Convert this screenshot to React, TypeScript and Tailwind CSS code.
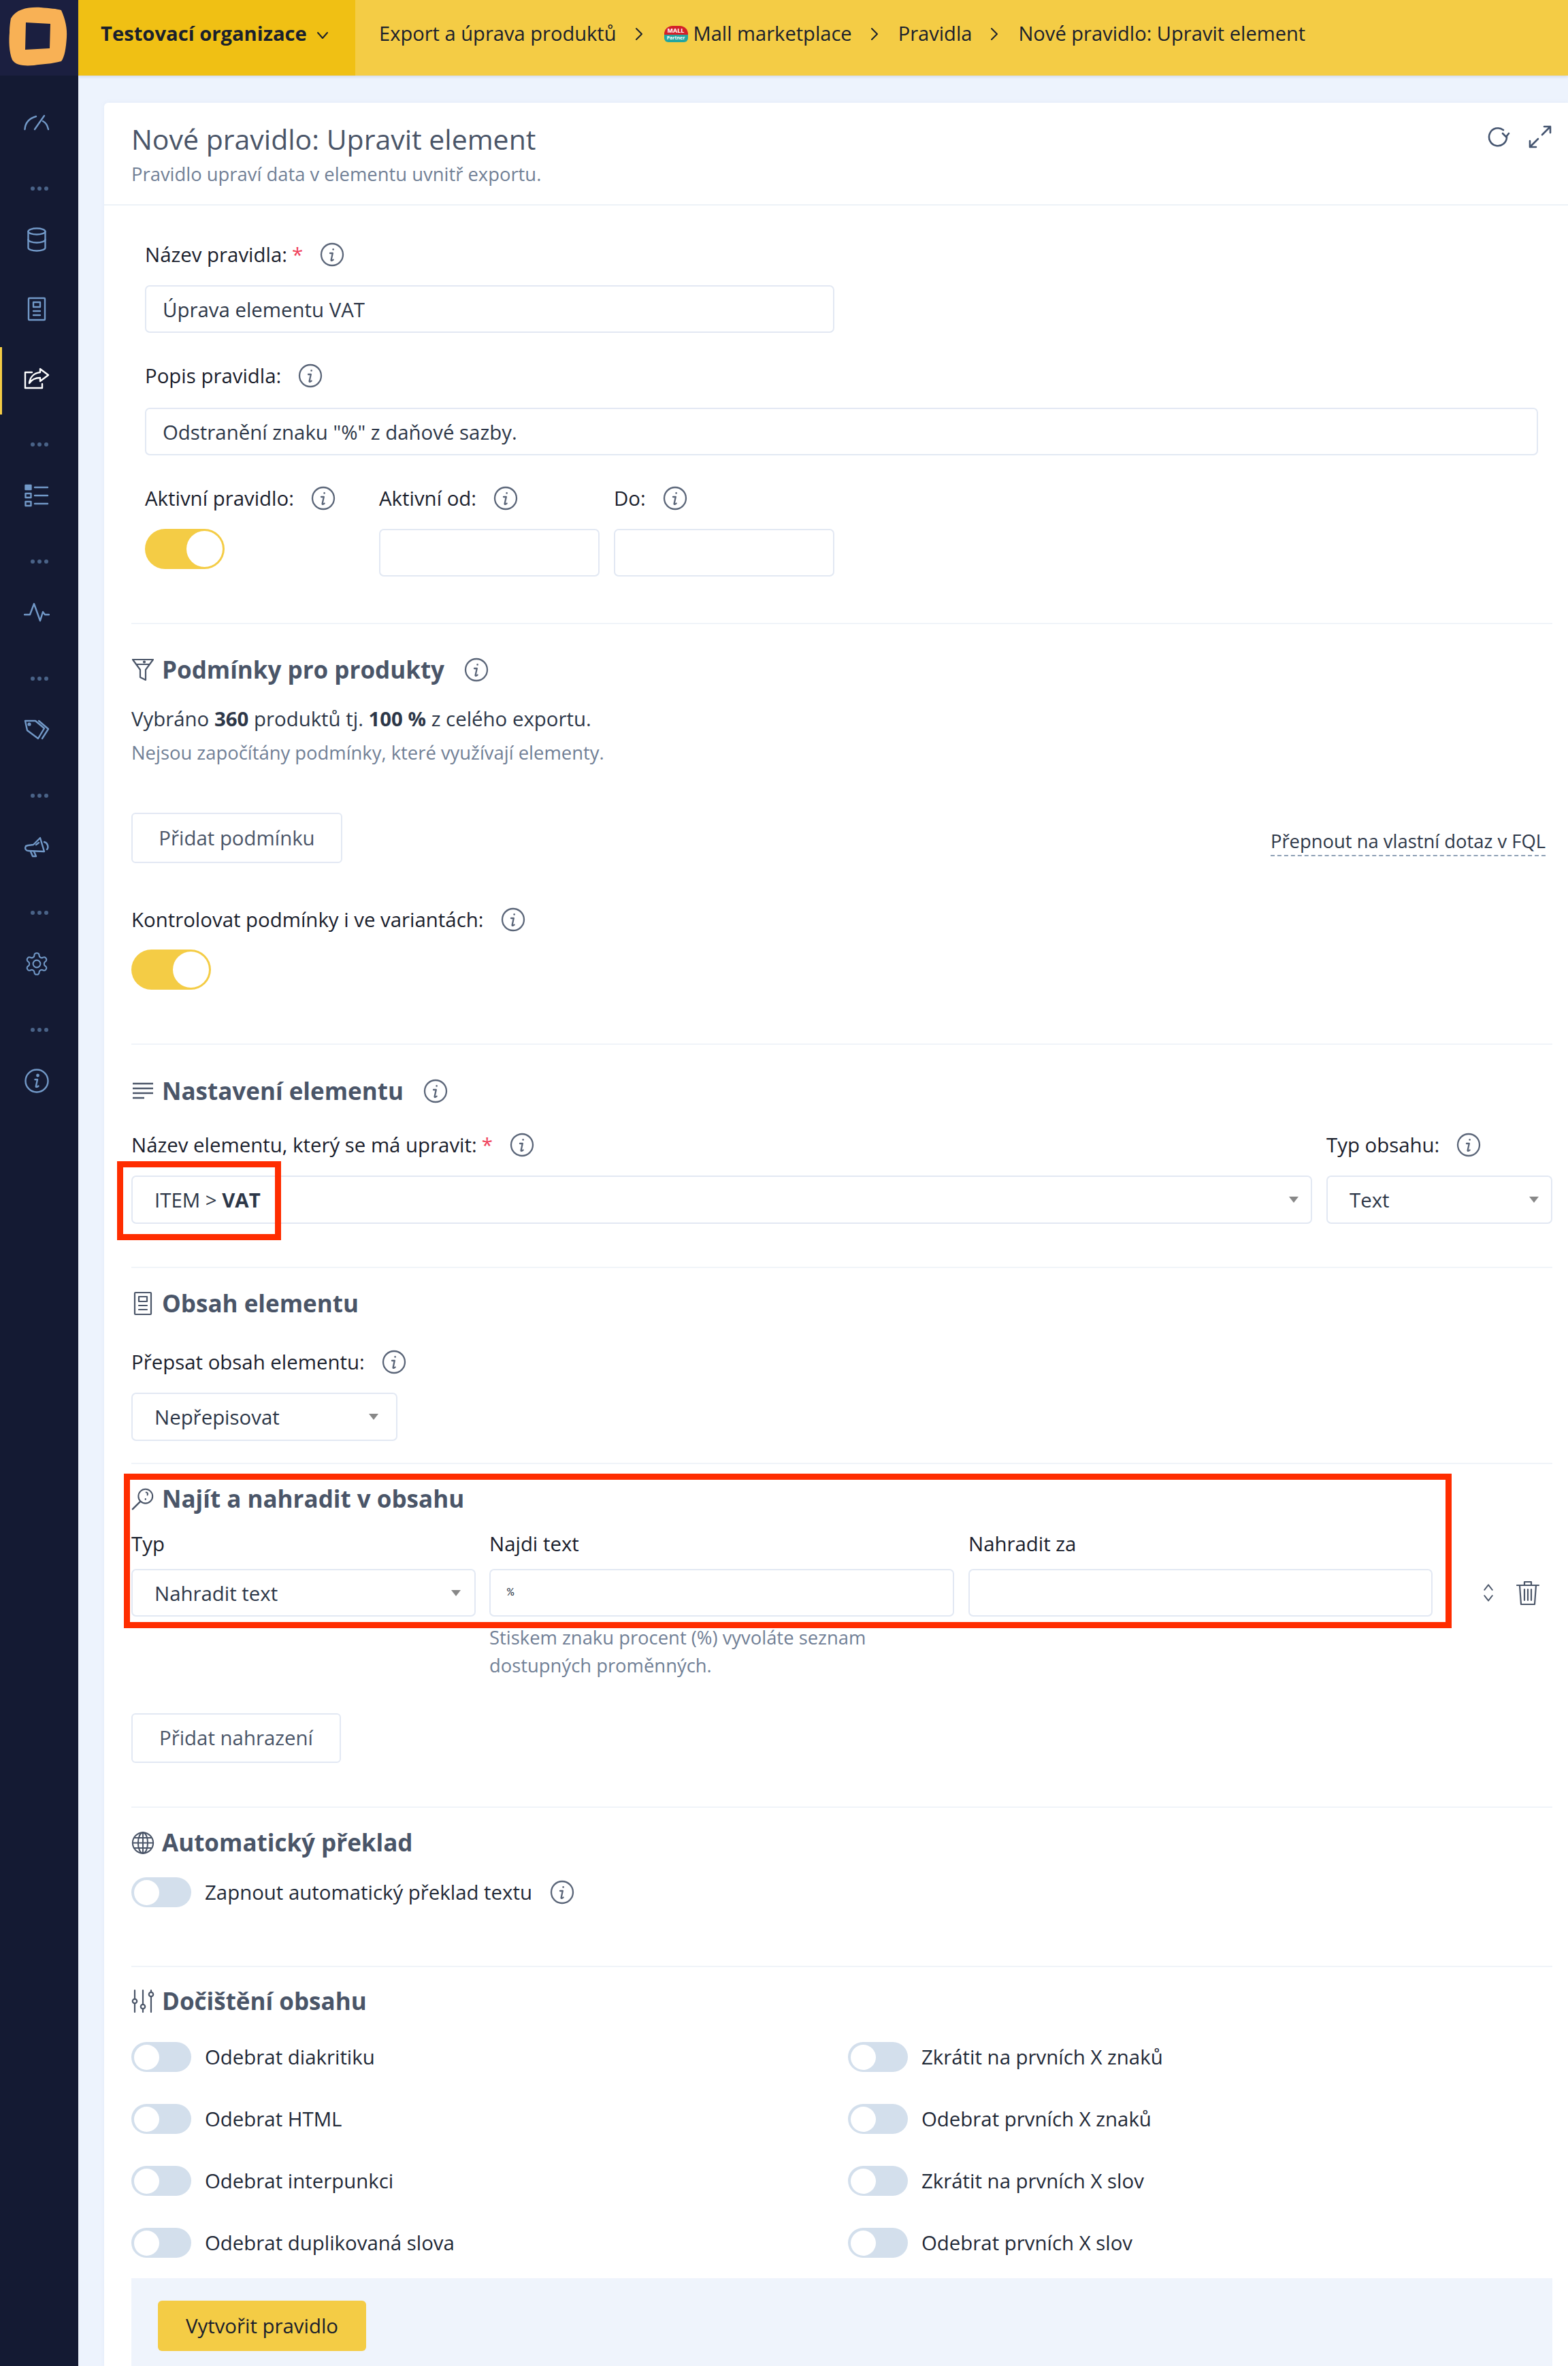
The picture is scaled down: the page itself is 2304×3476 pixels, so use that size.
import React from 'react';

const fieldClass = 'rounded-[7px] border-2 border-[#e2e8f3] bg-white text-[#2d3748] text-[29.4px] outline-none';

// Shared info icon next to labels and headings
const InfoIcon = ({ className = '' }: { className?: string }) => (
  <svg viewBox="0 0 36 36" className={`w-[36px] h-[36px] shrink-0 ${className}`} fill="none" stroke="#5a6578" strokeWidth="2.3" strokeLinecap="round">
    <circle cx="18" cy="18" r="16" />
    <path d="M15 16h3.8L16.6 26c-.2 1.2 1.2 1.2 3-.4" strokeLinejoin="round" />
    <circle cx="19.6" cy="10.4" r="1.3" fill="#5a6578" stroke="none" />
  </svg>
);

const Label = ({ text, required, info = true, className = '' }: { text: string; required?: boolean; info?: boolean; className?: string }) => (
  <div className={`h-[40px] flex items-center text-[29.4px] text-[#1a202c] whitespace-nowrap ${className}`}>
    <span>{text}</span>
    {required && <span className="ml-[7px] text-[#f0405a]">*</span>}
    {info && <InfoIcon className="ml-[25px]" />}
  </div>
);

const Divider = ({ className = '' }: { className?: string }) => <div className={`h-[2px] bg-[#f0f4f9] ${className}`} />;

const SelectBox = ({ text, className = '', arrowClass = 'mr-[26px]' }: { text?: string; className?: string; arrowClass?: string }) => (
  <div className={`${fieldClass} flex items-center justify-between pl-[32px] ${className}`}>
    <span className="pt-[2px]">{text}</span>
    <span className={`w-0 h-0 border-x-[7px] border-x-transparent border-t-[9px] border-t-[#888888] ${arrowClass}`} />
  </div>
);

const Toggle = ({ className = '' }: { className?: string }) => (
  <div className={`w-[117px] h-[59px] rounded-full bg-[#f4cc45] flex items-center justify-end pr-[3px] ${className}`}>
    <div className="w-[53px] h-[53px] rounded-full bg-white" />
  </div>
);

const OffToggle = ({ label, info }: { label: string; info?: boolean }) => (
  <div className="flex items-center h-[44px]">
    <div className="w-[88px] h-[44px] rounded-full bg-[#d3dfec] flex items-center pl-[4px] shrink-0">
      <div className="w-[37px] h-[37px] rounded-full bg-white" />
    </div>
    <span className="ml-[20px] text-[29.4px] text-[#1f2937] whitespace-nowrap">{label}</span>
    {info && <InfoIcon className="ml-[26px]" />}
  </div>
);

const OutlineButton = ({ text, className = '' }: { text: string; className?: string }) => (
  <button className={`rounded-[6px] border-2 border-[#e2e8f3] bg-white text-[29.4px] text-[#4a5568] ${className}`}>{text}</button>
);

const Heading = ({ icon, text, info, className = '' }: { icon: React.ReactNode; text: string; info?: boolean; className?: string }) => (
  <div className={`h-[44px] flex items-center ${className}`}>
    <div className="w-[34px] h-[40px] flex items-center justify-center shrink-0">{icon}</div>
    <h2 className="ml-[11px] text-[35px] font-bold text-[#4a5568] whitespace-nowrap">{text}</h2>
    {info && <InfoIcon className="ml-[29px]" />}
  </div>
);

const navStroke = {
  fill: 'none',
  stroke: '#7299c8',
  strokeWidth: 2.4,
  strokeLinecap: 'round' as const,
  strokeLinejoin: 'round' as const,
};

const NavDots = () => (
  <div className="mt-[74px] mb-[52px] h-[6px] flex justify-center gap-[4px]">
    <span className="w-[6px] h-[6px] rounded-full bg-[#4a6388]" />
    <span className="w-[6px] h-[6px] rounded-full bg-[#4a6388]" />
    <span className="w-[6px] h-[6px] rounded-full bg-[#4a6388]" />
  </div>
);

const NavIcon = ({ children, className = '' }: { children: React.ReactNode; className?: string }) => (
  <div className={`relative h-[40px] flex items-center justify-center pr-[7px] ${className}`}>{children}</div>
);

const Sidebar = () => (
  <aside className="w-[115px] shrink-0 bg-[#141a33] flex flex-col">
    <div className="h-[111px] bg-[#1b1f40] shrink-0">
      <svg viewBox="0 0 115 111" className="w-[115px] h-[111px]">
        <path
          fillRule="evenodd"
          fill="#f8b155"
          d="M16 27C24 13 42 10 60 11C72 12 84 13 90 15C96 28 99 42 98 55C97 70 95 84 90 90C76 94 62 94 50 96C38 97 24 97 18 88C13 76 13 58 14 48C14 40 15 32 16 27ZM38 33L74 35L73 71L37 73Z"
        />
      </svg>
    </div>
    <nav className="pt-[49px] flex flex-col">
      <NavIcon>
        <svg viewBox="0 0 38 24" className="w-[38px] h-[24px]" {...navStroke}>
          <path d="M1.5 22C2 13 8 6 18 3" />
          <path d="M30 2L16 22" />
          <path d="M28 10C32 12 35 17 36 22" />
        </svg>
      </NavIcon>
      <NavDots />
      <NavIcon>
        <svg viewBox="0 0 30 36" className="w-[30px] h-[36px]" {...navStroke}>
          <ellipse cx="15" cy="6" rx="12.5" ry="4.5" />
          <path d="M2.5 6V30C2.5 32.5 8 34.5 15 34.5S27.5 32.5 27.5 30V6" />
          <path d="M2.5 18C2.5 20.5 8 22.5 15 22.5S27.5 20.5 27.5 18" />
        </svg>
      </NavIcon>
      <NavIcon className="mt-[62px]">
        <svg viewBox="0 0 28 36" className="w-[28px] h-[36px]" {...navStroke}>
          <rect x="2" y="2" width="24" height="32" rx="1" />
          <rect x="9" y="8" width="10" height="7" />
          <path d="M9 21H19M9 27H19" />
        </svg>
      </NavIcon>
      <NavIcon className="mt-[62px]">
        <span className="absolute left-0 top-[-26px] w-[3px] h-[99px] bg-[#f4cc45]" />
        <svg viewBox="0 0 38 32" className="w-[38px] h-[32px]" fill="none" stroke="#ffffff" strokeWidth="2.4" strokeLinecap="round" strokeLinejoin="round">
          <path d="M12 7H2V30H27V24" />
          <path d="M24 2L36 11L24 20V15C17 15 12 17 8 23C9 14 15 8 24 7Z" />
        </svg>
      </NavIcon>
      <NavDots />
      <NavIcon>
        <svg viewBox="0 0 36 34" className="w-[36px] h-[34px]" {...navStroke}>
          <rect x="1.5" y="2" width="8" height="6" fill="#7299c8" />
          <rect x="1.5" y="14" width="8" height="6" />
          <rect x="1.5" y="26" width="8" height="6" />
          <path d="M15 5H34M15 17H34M15 29H34" />
        </svg>
      </NavIcon>
      <NavDots />
      <NavIcon>
        <svg viewBox="0 0 38 34" className="w-[38px] h-[34px]" {...navStroke}>
          <path d="M1 20H9L15 4L24 29L28 16L31 20H37" />
        </svg>
      </NavIcon>
      <NavDots />
      <NavIcon>
        <svg viewBox="0 0 38 34" className="w-[38px] h-[34px]" {...navStroke}>
          <path d="M2 4H17L30 15L21 30L5 18Z" />
          <path d="M22 4L36 16L27 30" />
          <circle cx="8" cy="9" r="1.4" />
        </svg>
      </NavIcon>
      <NavDots />
      <NavIcon>
        <svg viewBox="0 0 38 34" className="w-[38px] h-[34px]" {...navStroke}>
          <path d="M3 16C1 20 3 23 7 23L30 24L24 4L14 14L6 15Z" />
          <path d="M10 24L13 31H18L15 24" />
          <path d="M30 10C35 11 37 18 34 21" />
          <path d="M18 14L22 11" />
        </svg>
      </NavIcon>
      <NavDots />
      <NavIcon>
        <svg viewBox="0 0 24 24" className="w-[38px] h-[38px]" fill="none" stroke="#7299c8" strokeWidth="1.3" strokeLinecap="round" strokeLinejoin="round">
          <path d="M12.22 2h-.44a2 2 0 0 0-2 2v.18a2 2 0 0 1-1 1.73l-.43.25a2 2 0 0 1-2 0l-.15-.08a2 2 0 0 0-2.73.73l-.22.38a2 2 0 0 0 .73 2.73l.15.1a2 2 0 0 1 1 1.72v.51a2 2 0 0 1-1 1.74l-.15.09a2 2 0 0 0-.73 2.73l.22.38a2 2 0 0 0 2.73.73l.15-.08a2 2 0 0 1 2 0l.43.25a2 2 0 0 1 1 1.73V20a2 2 0 0 0 2 2h.44a2 2 0 0 0 2-2v-.18a2 2 0 0 1 1-1.73l.43-.25a2 2 0 0 1 2 0l.15.08a2 2 0 0 0 2.73-.73l.22-.39a2 2 0 0 0-.73-2.73l-.15-.08a2 2 0 0 1-1-1.74v-.5a2 2 0 0 1 1-1.74l.15-.09a2 2 0 0 0 .73-2.73l-.22-.38a2 2 0 0 0-2.73-.73l-.15.08a2 2 0 0 1-2 0l-.43-.25a2 2 0 0 1-1-1.73V4a2 2 0 0 0-2-2z" />
          <circle cx="12" cy="12" r="3.4" />
        </svg>
      </NavIcon>
      <NavDots />
      <NavIcon>
        <svg viewBox="0 0 36 36" className="w-[36px] h-[36px]" {...navStroke}>
          <circle cx="18" cy="18" r="16.5" />
          <path d="M15.5 16H19L16.8 26C16.6 27.4 18.4 27.2 20.5 25.5" />
          <circle cx="19.5" cy="10" r="1.2" fill="#7299c8" />
        </svg>
      </NavIcon>
    </nav>
  </aside>
);

const Chevron = ({ className = '' }: { className?: string }) => (
  <svg viewBox="0 0 12 20" className={`w-[12px] h-[20px] ${className}`} fill="none" stroke="#1a202c" strokeWidth="2" strokeLinecap="round" strokeLinejoin="round">
    <path d="M2 2L10 10L2 18" />
  </svg>
);

const MallBadge = () => (
  <div className="w-[35px] h-[24px] flex flex-col overflow-hidden rounded-[6px] font-bold text-white text-center shrink-0">
    <div className="h-[13px] bg-[#d3202a] rounded-t-[12px] text-[9px] leading-[13px]">MALL</div>
    <div className="h-[11px] bg-[#23a5a0] text-[7px] leading-[10px]">Partner</div>
  </div>
);

const Topbar = () => (
  <header className="h-[111px] shrink-0 bg-[#f4cc45] flex shadow-[0_2px_4px_rgba(90,100,130,0.18)] relative">
    <div className="w-[407px] bg-[#f0c014] flex items-center pl-[33px] pb-[12px] text-[#1a202c]">
      <span className="text-[29.2px] font-bold whitespace-nowrap">Testovací organizace</span>
      <svg viewBox="0 0 18 12" className="ml-[14px] mt-[4px] w-[18px] h-[12px]" fill="none" stroke="#1a202c" strokeWidth="2" strokeLinecap="round" strokeLinejoin="round">
        <path d="M2 2L9 10L16 2" />
      </svg>
    </div>
    <div className="flex items-center pl-[35px] pb-[12px] text-[29.1px] text-[#1a202c] whitespace-nowrap">
      <span>Export a úprava produktů</span>
      <Chevron className="ml-[27px] mr-[31px]" />
      <MallBadge />
      <span className="ml-[8px]">Mall marketplace</span>
      <Chevron className="ml-[27px] mr-[29px]" />
      <span>Pravidla</span>
      <Chevron className="ml-[27px] mr-[29px]" />
      <span>Nové pravidlo: Upravit element</span>
    </div>
  </header>
);

const iconStroke = {
  fill: 'none',
  stroke: '#4a5568',
  strokeWidth: 2.2,
  strokeLinecap: 'round' as const,
  strokeLinejoin: 'round' as const,
};

const RuleForm = () => (
  <div className="bg-white rounded-tl-[6px] ml-[38px] mt-[40px] shadow-[0_0_6px_rgba(120,140,180,0.08)]">
    <div className="h-[151px] border-b-2 border-[#edf2f7] flex justify-between pl-[40px] pr-[23px]">
      <div>
        <h1 className="mt-[23px] text-[41px] leading-[60px] text-[#4a5568] whitespace-nowrap">Nové pravidlo: Upravit element</h1>
        <p className="mt-[2px] text-[27.4px] leading-[40px] text-[#718096] whitespace-nowrap">Pravidlo upraví data v elementu uvnitř exportu.</p>
      </div>
      <div className="flex items-start pt-[32px] gap-[26px]">
        <svg viewBox="0 0 36 36" className="w-[36px] h-[36px]" fill="none" stroke="#44546f" strokeWidth="2.6" strokeLinecap="round" strokeLinejoin="round">
          <path d="M31 18A13 13 0 1 1 26 8" />
          <path d="M26 14L31 19L35 14" transform="translate(-1 -1)" />
        </svg>
        <svg viewBox="0 0 36 36" className="w-[36px] h-[36px]" fill="none" stroke="#44546f" strokeWidth="2.6" strokeLinecap="round" strokeLinejoin="round">
          <path d="M21 15L33 3M24 3H33V12" />
          <path d="M15 21L3 33M3 24V33H12" />
        </svg>
      </div>
    </div>

    <div className="pl-[40px] pr-[23px]">
      <div className="pl-[20px] pr-[21px] pt-[52px]">
        <Label text="Název pravidla:" required />
        <input readOnly value="Úprava elementu VAT" className={`${fieldClass} h-[70px] mt-[25px] w-[1013px] px-[24px] pt-[2px] block`} />
        <Label text="Popis pravidla:" className="mt-[43px]" />
        <input readOnly value='Odstranění znaku "%" z daňové sazby.' className={`${fieldClass} h-[70px] mt-[27px] w-full px-[24px] pt-[2px] block`} />
        <div className="mt-[43px] flex">
          <div className="w-[344px]">
            <Label text="Aktivní pravidlo:" />
            <Toggle className="mt-[25px]" />
          </div>
          <div className="w-[345px]">
            <Label text="Aktivní od:" />
            <div className={`${fieldClass} h-[70px] mt-[25px] w-[324px]`} />
          </div>
          <div>
            <Label text="Do:" />
            <div className={`${fieldClass} h-[70px] mt-[25px] w-[324px]`} />
          </div>
        </div>
      </div>
      <Divider className="mt-[68px]" />

      <Heading
        text="Podmínky pro produkty"
        info
        className="mt-[45px]"
        icon={
          <svg viewBox="0 0 34 36" className="w-[34px] h-[36px]" {...iconStroke}>
            <path d="M2 3H32L21 18V33L13 29V18Z" />
            <path d="M8 10H26" />
            <circle cx="19" cy="6.5" r="1" />
          </svg>
        }
      />
      <p className="mt-[30px] text-[29.4px] leading-[40px] text-[#2d3748]">
        Vybráno <b>360</b> produktů tj. <b>100 %</b> z celého exportu.
      </p>
      <p className="mt-[10px] text-[27.4px] leading-[40px] text-[#718096]">Nejsou započítány podmínky, které využívají elementy.</p>
      <div className="mt-[68px] flex justify-between items-start">
        <OutlineButton text="Přidat podmínku" className="h-[74px] w-[310px]" />
        <span className="mt-[21px] mr-[10px] text-[27.4px] leading-[41px] text-[#2d3748] border-b-2 border-dashed border-[#8ea0b5]">Přepnout na vlastní dotaz v FQL</span>
      </div>
      <Label text="Kontrolovat podmínky i ve variantách:" className="mt-[63px]" />
      <Toggle className="mt-[24px]" />
      <Divider className="mt-[79px]" />

      <Heading
        text="Nastavení elementu"
        info
        className="mt-[46px]"
        icon={
          <svg viewBox="0 0 32 28" className="w-[32px] h-[28px]" fill="none" stroke="#4a5568" strokeWidth="2.4">
            <path d="M1 3H31M1 10H31M1 17H31M1 24H18" />
          </svg>
        }
      />
      <div className="mt-[37px] flex gap-[21px]">
        <div className="w-[1735px]">
          <Label text="Název elementu, který se má upravit:" required />
          <div className="relative mt-[25px]">
            <div className={`${fieldClass} h-[71px] flex items-center justify-between pl-[32px]`}>
              <span className="pt-[2px]">
                ITEM &gt; <b>VAT</b>
              </span>
              <span className="w-0 h-0 border-x-[7px] border-x-transparent border-t-[9px] border-t-[#888888] mr-[18px]" />
            </div>
            {/* annotation from the original screenshot */}
            <div className="absolute left-[-21px] top-[-21px] w-[241px] h-[116px] border-[9px] border-[#ff2d00]" />
          </div>
        </div>
        <div className="flex-1">
          <Label text="Typ obsahu:" />
          <SelectBox text="Text" className="h-[71px] mt-[25px]" arrowClass="mr-[18px]" />
        </div>
      </div>
      <Divider className="mt-[63px]" />

      <Heading
        text="Obsah elementu"
        className="mt-[30px]"
        icon={
          <svg viewBox="0 0 28 36" className="w-[28px] h-[36px]" {...iconStroke}>
            <rect x="2" y="2" width="24" height="32" rx="1" />
            <rect x="8" y="8" width="12" height="7" />
            <path d="M8 21H20M8 27H20" />
          </svg>
        }
      />
      <Label text="Přepsat obsah elementu:" className="mt-[44px]" />
      <SelectBox text="Nepřepisovat" className="h-[71px] mt-[25px] w-[391px]" />
      <Divider className="mt-[32px]" />

      <div className="relative mt-[29px]">
        <Heading
          text="Najít a nahradit v obsahu"
          icon={
            <svg viewBox="0 0 36 36" className="w-[36px] h-[36px]" {...iconStroke}>
              <circle cx="22" cy="14" r="11" />
              <path d="M14 22L2 34" strokeWidth="2.6" />
              <path d="M23 8C25 8 26 10 25 12M22 18V19" />
            </svg>
          }
        />
        <div className="mt-[24px] flex text-[29.4px] text-[#1a202c] h-[40px] leading-[40px]">
          <span className="w-[526px]">Typ</span>
          <span className="w-[704px]">Najdi text</span>
          <span>Nahradit za</span>
        </div>
        <div className="mt-[17px] flex items-center">
          <SelectBox text="Nahradit text" className="h-[70px] w-[506px]" arrowClass="mr-[20px]" />
          <div className={`${fieldClass} h-[70px] ml-[20px] w-[683px] pl-[24px] flex items-center`}>
            <span className="font-['Liberation_Mono',monospace] text-[17px]">%</span>
          </div>
          <div className={`${fieldClass} h-[70px] ml-[21px] w-[682px]`} />
          <svg viewBox="0 0 20 36" className="ml-[72px] w-[20px] h-[30px]" {...iconStroke}>
            <path d="M3 13L10 4L17 13M3 23L10 32L17 23" />
          </svg>
          <svg viewBox="0 0 36 38" className="ml-[30px] w-[36px] h-[38px]" {...iconStroke}>
            <path d="M2 8H34M13 8V3H23V8M6 8L8 36H28L30 8M13 14V30M18 14V30M23 14V30" />
          </svg>
        </div>
        {/* annotation from the original screenshot */}
        <div className="absolute left-[-11px] top-[-15px] w-[1951px] h-[227px] border-[9px] border-[#ff2d00] pointer-events-none" />
      </div>
      <p className="mt-[10px] ml-[526px] w-[640px] text-[27.4px] leading-[41px] text-[#718096]">Stiskem znaku procent (%) vyvoláte seznam dostupných proměnných.</p>
      <OutlineButton text="Přidat nahrazení" className="mt-[50px] w-[308px] h-[73px] block" />
      <Divider className="mt-[64px]" />

      <Heading
        text="Automatický překlad"
        className="mt-[29px]"
        icon={
          <svg viewBox="0 0 36 36" className="w-[35px] h-[35px]" {...iconStroke}>
            <circle cx="18" cy="18" r="16" />
            <ellipse cx="18" cy="18" rx="7.5" ry="16" />
            <path d="M18 2V34M2 18H34M4.5 10H31.5M4.5 26H31.5" />
          </svg>
        }
      />
      <div className="mt-[29px]">
        <OffToggle label="Zapnout automatický překlad textu" info />
      </div>
      <Divider className="mt-[86px]" />

      <Heading
        text="Dočištění obsahu"
        className="mt-[28px]"
        icon={
          <svg viewBox="0 0 34 36" className="w-[34px] h-[36px]" {...iconStroke}>
            <path d="M5 2V14M5 22V34M17 2V22M17 30V34M29 2V4M29 12V34" />
            <circle cx="5" cy="18" r="3.2" />
            <circle cx="17" cy="26" r="3.2" />
            <circle cx="29" cy="8" r="3.2" />
          </svg>
        }
      />
      <div className="mt-[38px] grid grid-cols-[1053px_1fr] gap-y-[47px]">
        <OffToggle label="Odebrat diakritiku" />
        <OffToggle label="Zkrátit na prvních X znaků" />
        <OffToggle label="Odebrat HTML" />
        <OffToggle label="Odebrat prvních X znaků" />
        <OffToggle label="Odebrat interpunkci" />
        <OffToggle label="Zkrátit na prvních X slov" />
        <OffToggle label="Odebrat duplikovaná slova" />
        <OffToggle label="Odebrat prvních X slov" />
      </div>

      <div className="mt-[30px] h-[129px] bg-[#eff4fc] pt-[33px] pl-[39px]">
        <button className="w-[306px] h-[74px] rounded-[6px] bg-[#f4cc45] text-[29.4px] text-[#1a202c]">Vytvořit pravidlo</button>
      </div>
    </div>
  </div>
);

export default function App() {
  return (
    <div className="flex w-[2304px] h-[3476px] overflow-hidden bg-[#edf3fd] font-['Open_Sans',sans-serif]">
      <Sidebar />
      <main className="flex-1 min-w-0 flex flex-col">
        <Topbar />
        <RuleForm />
      </main>
    </div>
  );
}
